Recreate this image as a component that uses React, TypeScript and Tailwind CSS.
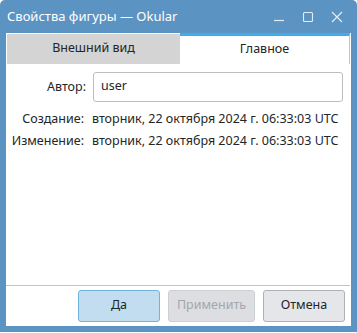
import React from "react";

const font = { fontFamily: '"Noto Sans", "Open Sans", sans-serif' };

function TitleButtons() {
  return (
    <div className="flex items-center">
      <svg width="12" height="12" viewBox="0 0 12 12">
        <path d="M1 9.5 H11" stroke="#e3edf6" strokeWidth="1.2" fill="none" />
      </svg>
      <svg width="12" height="12" viewBox="0 0 12 12" className="ml-[17px]">
        <rect x="1.5" y="1.5" width="9" height="9" rx="1" stroke="#e3edf6" strokeWidth="1.1" fill="none" />
      </svg>
      <svg width="12" height="12" viewBox="0 0 12 12" className="ml-[17px]">
        <path d="M1 1 L11 11 M11 1 L1 11" stroke="#e3edf6" strokeWidth="1.2" fill="none" />
      </svg>
    </div>
  );
}

export default function App() {
  return (
    <div className="w-[357px] h-[333px] bg-white text-[12.5px] text-[#232627]" style={font}>
      <div className="flex flex-col w-[357px] h-[332px] bg-[#5b93c3] rounded-t-[5px]">
        {/* title bar */}
        <div className="h-[33px] flex items-center justify-between pl-[7px] pr-[14px]">
          <span className="text-white text-[13px] leading-none -mt-[1px]">Свойства фигуры — Okular</span>
          <TitleButtons />
        </div>

        {/* body */}
        <div className="mx-[6px] flex-1 bg-white flex flex-col">
          {/* tabs */}
          <div className="h-[31px] flex px-[1px]">
            <div className="w-[173px] mt-[1px] bg-[#d4d4d4] flex items-center justify-center pb-[2px]">
              Внешний вид
            </div>
            <div className="w-[170px] border-t-[3px] border-t-[#3daee9] border-r border-r-[#c4c4c4] flex items-center justify-center pb-[1px]">
              Главное
            </div>
          </div>

          {/* form */}
          <div className="flex-1 flex flex-col pt-[8px]">
            <div className="flex items-center">
              <div className="w-[80px] text-right">Автор:</div>
              <div className="ml-[7px] w-[250px] h-[30px] border border-[#bcbdbf] rounded-[3px] flex items-center pl-[7px] pb-[1px]">
                user
              </div>
            </div>
            <div className="flex items-center h-[22px] mt-[6px]">
              <div className="w-[78px] text-right">Создание:</div>
              <div className="ml-[8px] whitespace-nowrap">вторник, 22 октября 2024 г. 06:33:03 UTC</div>
            </div>
            <div className="flex items-center h-[22px]">
              <div className="w-[78px] text-right">Изменение:</div>
              <div className="ml-[8px] whitespace-nowrap">вторник, 22 октября 2024 г. 06:33:03 UTC</div>
            </div>
          </div>

          {/* buttons */}
          <div className="h-[41px] border-t border-t-[#c4c4c4] flex items-start justify-end pt-[4px] pr-[5px] mr-[1px] gap-[8px]">
            <button className="w-[82px] h-[32px] rounded-[3px] border border-[#6fb3de] bg-[#c3ddf0] text-[#232627] pb-[1px]">
              Да
            </button>
            <button className="w-[87px] h-[32px] rounded-[3px] border border-[#cdcfd2] bg-[#dcdee2] text-[#a4a6a9] pb-[1px]">
              Применить
            </button>
            <button className="w-[82px] h-[32px] rounded-[3px] border border-[#afb1b4] bg-[#e5e6e9] text-[#232627] pb-[1px]">
              Отмена
            </button>
          </div>
        </div>
        <div className="h-[6px]" />
      </div>
    </div>
  );
}
